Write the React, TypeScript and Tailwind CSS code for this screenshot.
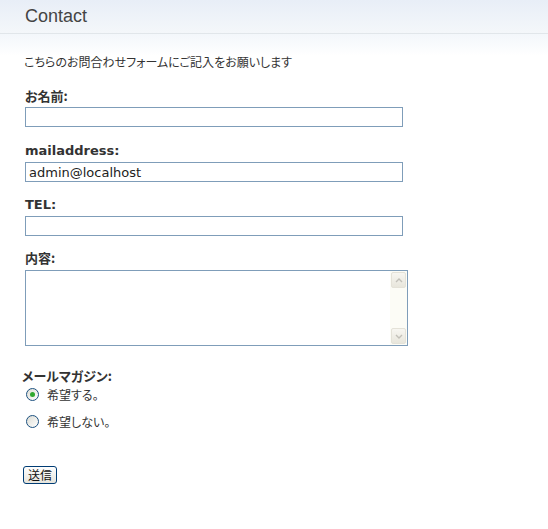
import { useState } from "react";

const jp = "font-['Noto_Sans_CJK_JP',sans-serif] [font-feature-settings:'palt']";
const latin = "font-['DejaVu_Sans','Noto_Sans_CJK_JP',sans-serif]";

function Label({ children, className = "" }: { children: React.ReactNode; className?: string }) {
  return (
    <div className={`text-[13px] font-bold leading-none text-[#333] ${className}`}>{children}</div>
  );
}

function Radio({ checked, label, onClick }: { checked: boolean; label: string; onClick: () => void }) {
  return (
    <button type="button" onClick={onClick} className="flex items-center gap-[8px]">
      <span className="flex h-[13px] w-[13px] items-center justify-center rounded-full border border-[#1c5180] bg-gradient-to-br from-[#dcdcd4] to-white">
        {checked && <span className="h-[5px] w-[5px] rounded-full bg-[#2fa82f]" />}
      </span>
      <span className={`${jp} text-[12px] leading-none text-[#333]`}>{label}</span>
    </button>
  );
}

function Arrow({ up }: { up?: boolean }) {
  return (
    <div className="flex h-[16px] w-[15px] items-center justify-center rounded-[2px] border border-[#e4e2d8] bg-gradient-to-b from-[#f7f6f1] to-[#e8e6dc]">
      <svg width="8" height="5" viewBox="0 0 8 5">
        <path d={up ? "M1 4 L4 1 L7 4" : "M1 1 L4 4 L7 1"} fill="none" stroke="#c2c0b8" strokeWidth="1.4" />
      </svg>
    </div>
  );
}

export default function App() {
  const [mail, setMail] = useState("admin@localhost");
  const [wants, setWants] = useState(true);

  return (
    <div className="min-h-[529px] w-[548px] bg-white">
      <div className="h-[34px] border-b border-[#e1e6ea] bg-gradient-to-b from-[#e8eef7] to-[#f4f7fa] pl-[25px] pt-[5px]">
        <h1 className="font-['Liberation_Sans',sans-serif] text-[18px] leading-[22px] text-[#444]">Contact</h1>
      </div>
      <div className="h-[22px] bg-gradient-to-b from-[#f3f7fb] to-white" />

      <form className="flex flex-col pl-[25px]" onSubmit={(e) => e.preventDefault()}>
        <p className={`${jp} -ml-[1px] text-[12px] leading-none text-[#333]`}>
          こちらのお問合わせフォームにご記入をお願いします
        </p>

        <Label className={`${jp} mt-[21px]`}>お名前:</Label>
        <input className="mt-[5px] h-[20px] w-[378px] border border-[#7f9db9] bg-white px-[3px] outline-none" />

        <Label className={`${latin} mt-[17px] text-[12px]`}>mailaddress:</Label>
        <input
          value={mail}
          onChange={(e) => setMail(e.target.value)}
          className={`${latin} mt-[5px] h-[20px] w-[378px] border border-[#7f9db9] bg-white px-[3px] text-[13px] leading-none text-[#222] outline-none`}
        />

        <Label className={`${latin} mt-[16px] text-[12px]`}>TEL:</Label>
        <input className="mt-[5px] h-[20px] w-[378px] border border-[#7f9db9] bg-white px-[3px] outline-none" />

        <Label className={`${jp} mt-[15px]`}>内容:</Label>
        <div className="mt-[6px] flex h-[76px] w-[383px] border border-[#7f9db9] bg-white">
          <textarea className="flex-1 resize-none px-[3px] outline-none [scrollbar-width:none]" />
          <div className="flex w-[17px] flex-col items-center justify-between bg-[#fcfcf6] py-[1px]">
            <Arrow up />
            <Arrow />
          </div>
        </div>

        <Label className={`${jp} -ml-[3px] mt-[23px]`}>メールマガジン:</Label>
        <div className="mt-[6px] flex flex-col gap-[14px] pl-[1px]">
          <Radio checked={wants} label="希望する。" onClick={() => setWants(true)} />
          <Radio checked={!wants} label="希望しない。" onClick={() => setWants(false)} />
        </div>

        <div className="mt-[34px]">
          <button
            type="submit"
            className={`${jp} -ml-[2px] h-[18px] w-[34px] rounded-[3px] border border-[#003c74] bg-gradient-to-b from-white to-[#e6e4dc] text-[12px] leading-none text-[#111]`}
          >
            送信
          </button>
        </div>
      </form>
    </div>
  );
}
